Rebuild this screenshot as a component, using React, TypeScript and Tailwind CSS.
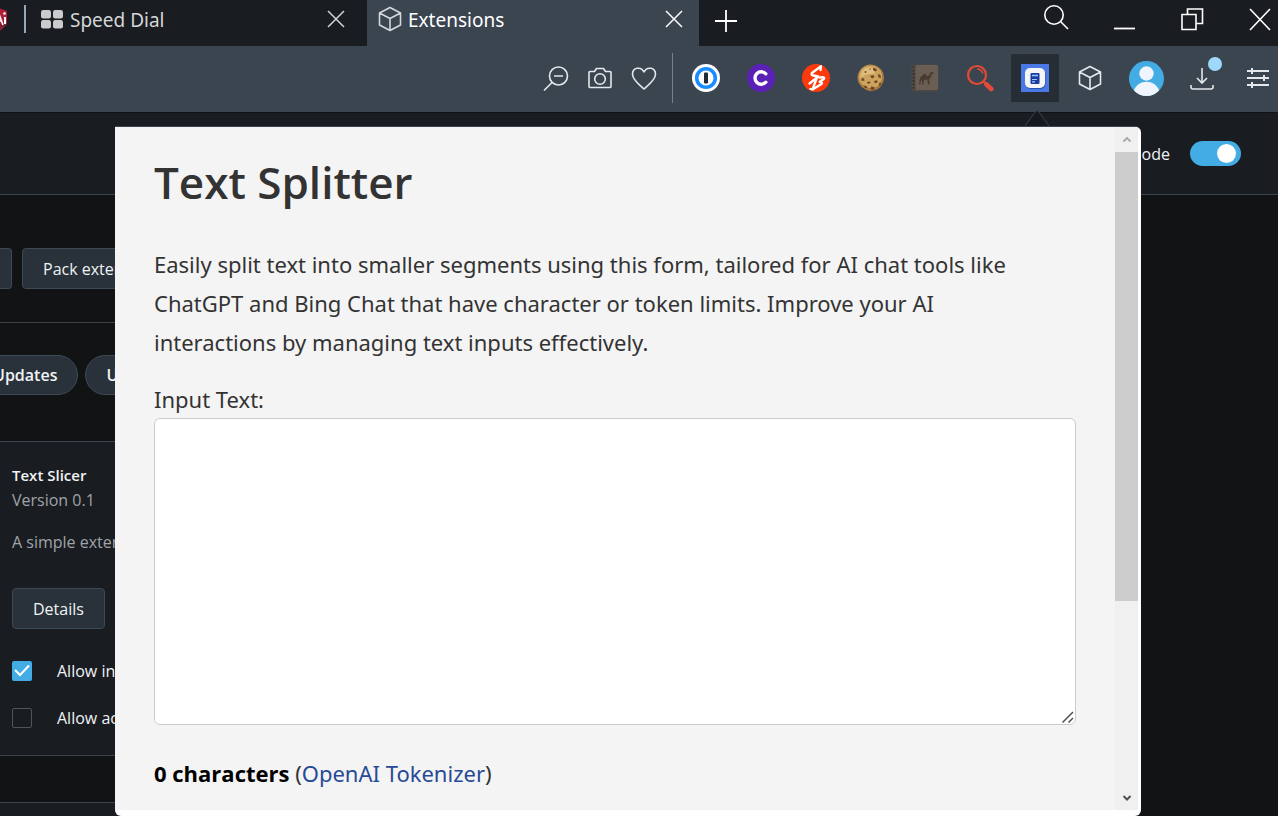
import React from "react";

type IconProps = { children: React.ReactNode; size?: string; box?: string; stroke?: string };

function Icon({ children, size = "size-7", box = "0 0 28 28", stroke = "1.6" }: IconProps) {
  return (
    <svg
      className={`${size} shrink-0`}
      viewBox={box}
      fill="none"
      stroke="currentColor"
      strokeWidth={stroke}
      aria-hidden="true"
    >
      {children}
    </svg>
  );
}

const Cube = () => (
  <Icon>
    <path d="M14 2.5 24.5 8v12L14 25.5 3.500 20V8Z M3.500 8 14 13.500 24.500 8 M14 13.500v12" strokeLinejoin="round" />
  </Icon>
);

const Cross = () => (
  <Icon size="size-5" box="0 0 20 20" stroke="1.5">
    <path d="m2 2 16 16M18 2 2 18" />
  </Icon>
);

function AiShield() {
  return (
    <svg className="h-7 w-2 shrink-0" viewBox="0 0 8 28" aria-hidden="true">
      <path d="M-12 7 -4 2 7 6v13l-6 6-6 3Z" fill="#b01f38" />
      <path d="M-12 20 7 18v1l-6 6-6 3Z" fill="#7c2230" />
      <path d="m-6 20 5-11 4 11M-4 16h6" stroke="#fff" strokeWidth="1.600" fill="none" />
      <path d="M5 12v7" stroke="#fff" strokeWidth="2" />
      <circle cx="4.500" cy="8.500" r="1.300" fill="#fff" />
    </svg>
  );
}

function OnePassword() {
  return (
    <svg className="size-7" viewBox="0 0 28 28" aria-hidden="true">
      <circle cx="14" cy="14" r="14" fill="#fff" />
      <circle cx="14" cy="14" r="9.300" fill="#fff" stroke="#1a8cff" strokeWidth="3.600" />
      <rect x="12" y="8.500" width="4" height="11" rx="1" fill="#222a33" />
    </svg>
  );
}

function PurpleC() {
  return (
    <svg className="size-7" viewBox="0 0 28 28" aria-hidden="true">
      <circle cx="14" cy="14" r="14" fill="#5b21b6" />
      <path d="M18.800 9.800a6.200 6.200 0 1 0 0 8.400" fill="none" stroke="#fff" strokeWidth="3.400" strokeLinecap="round" />
    </svg>
  );
}

function RedBolt() {
  return (
    <svg className="size-7" viewBox="0 0 28 28" aria-hidden="true">
      <circle cx="14" cy="14" r="14" fill="#fc3a0c" />
      <path
        d="M18.500 6 19 2.200 10 9q-1.500 2 1.500 2.500l4.800 1L7.500 19.500M14.600 14.500 10.500 25.500l-2-.5M10.500 25.500 19.500 20q1.800-1.800-1.800-2.200L22 14.800q1.200-2.500-4.500-1.200"
        fill="none"
        stroke="#fff"
        strokeWidth="2.300"
        strokeLinejoin="round"
        strokeLinecap="round"
      />
    </svg>
  );
}

function Cookie() {
  return (
    <svg className="size-7" viewBox="0 0 28 28" aria-hidden="true">
      <path
        d="M14 .5c3 0 5 .8 7.500 2.800 3 2 4.500 4 5 7.200.9 3.500.6 6-1 9-1.500 3.500-4 5.800-7.500 6.800-3.500 1.200-6.500.9-9.500-.8C4.500 23.500 2 20.500.9 17 0 13.500.5 10 2.500 7 4.500 3 9 .5 14 .5Z"
        fill="#a87b40"
      />
      <path d="M13 1.500c5-.5 9 2 11 6s1.500 8-1 12-6 5-10 4.500-9-3-10.500-7.500S2 7.500 5.500 4.500 10 1.800 13 1.500Z" fill="#cda25e" />
      <path d="M6 6c4-4 9-3 11-1s2 5-3 5-9 2-10 4 0-6 2-8Z" fill="#dfbd7c" />
      <g fill="#6d4724">
        <path d="m16 4 3 .5 1 2-2 1-2-1.500Z" />
        <path d="m13 12 3-1 1.500 2-2.500 1.500Z" />
        <path d="m21 10 2.500 1 .5 3-2.500-.5Z" />
        <path d="m4.500 14 2.500.5.500 2-3 .5Z" />
        <path d="m10 18 3-.5.500 1.500-2.500 1Z" />
        <path d="m17 17 3-.8.800 2-2.800 1Z" />
        <path d="m6.500 21.500 3 .5 1 2-2.500.3Z" />
        <path d="m14 22.500 3.500.5-.5 3-3.500-.6Z" />
        <path d="m22.500 18.500 1.800.5-.8 3-1.800-.8Z" />
        <circle cx="8.500" cy="8" r="1" />
        <circle cx="13" cy="5" r=".7" />
      </g>
    </svg>
  );
}

function CamelBook() {
  return (
    <svg className="size-7" viewBox="0 0 28 28" aria-hidden="true">
      <rect x=".5" y=".5" width="27" height="27" rx="2" fill="#4f4843" />
      <rect x="4.500" y="1" width="22.500" height="25" rx="1.500" fill="#695d54" />
      <path d="M2.500 2.500v23" stroke="#2f2c2a" strokeWidth="1.600" strokeDasharray="1.600 1.800" />
      <path
        d="M8 20.500 9 14c.8-2 2-1.500 3-3 .8-1.800 2.200-1.800 3 0 .8 1.500 2 1.500 3 .2l1.200-2.400c.5-1 2-1 3.300-.3v1.300l-2 .4c-.3 2.300-1 4-2.500 4.700l.5 5.600h-1.300l-1-5-3 .2-1 4.800h-1.300l.2-4.600-1.300 1.300-.6 3.300Z"
        fill="#4a3a32"
      />
    </svg>
  );
}

function RedLens() {
  return (
    <svg className="size-7" viewBox="0 0 28 28" aria-hidden="true">
      <circle cx="11" cy="11" r="9" fill="none" stroke="#e34a38" strokeWidth="2.200" />
      <path d="M11 5c3 0 5 2 5.800 4.500" fill="none" stroke="#e34a38" strokeWidth="1.500" />
      <path d="m17.800 17.800 3 3" stroke="#e34a38" strokeWidth="2.500" />
      <path d="m20.500 20.500 4.800 4.500" stroke="#e34a38" strokeWidth="4.600" strokeLinecap="round" />
    </svg>
  );
}

function SplitterLogo() {
  return (
    <svg className="size-7" viewBox="0 0 28 28" aria-hidden="true">
      <rect width="28" height="28" fill="#4a78e4" />
      <rect x="4.500" y="5" width="20" height="20" rx="5" fill="#2b52b0" />
      <rect x="4" y="4" width="20" height="20" rx="5" fill="#f5f5f5" />
      <rect x="9.500" y="9" width="9" height="11" rx="1" fill="#1a3c9c" />
      <path d="M11 11.500h6" stroke="#8fc4ff" strokeWidth="1.600" />
      <path d="M11 15.500h5M11 17.800h3" stroke="#a9c6f5" strokeWidth="1.200" />
    </svg>
  );
}

function Avatar() {
  return (
    <svg className="size-[35px]" viewBox="0 0 35 35" aria-hidden="true">
      <defs>
        <clipPath id="avatar-disc">
          <circle cx="17.500" cy="17.500" r="17.500" />
        </clipPath>
      </defs>
      <g clipPath="url(#avatar-disc)">
        <rect width="35" height="35" fill="#43ace4" />
        <circle cx="17.500" cy="12.500" r="7.200" fill="#f0f4fd" />
        <path d="M5 29c2.500-5.500 7-8.300 12.500-8.300S27.500 23.500 30 29v7H5Z" fill="#f0f4fd" />
      </g>
    </svg>
  );
}

function TabStrip() {
  return (
    <header className="flex h-[46px] items-stretch bg-[#191c20] font-['Noto_Sans',sans-serif] text-[19px] text-[#d4d6d8]">
      <div className="flex min-w-0 flex-[0_1_367px] items-center pb-2">
        <AiShield />
        <span className="ml-4 h-7 w-0.5 shrink-0 bg-[#9aa6b8]" />
        <Icon size="ml-3.5 size-6" box="0 0 24 24">
          <g fill="#c9cbcd" stroke="none">
            <rect x="1" y="3" width="10" height="8.500" rx="2.200" />
            <rect x="13" y="3" width="10" height="8.500" rx="2.200" />
            <rect x="1" y="13" width="10" height="8.500" rx="2.200" />
            <rect x="13" y="13" width="10" height="8.500" rx="2.200" />
          </g>
        </Icon>
        <span className="ml-1.5 flex-1 truncate pt-0.5">Speed Dial</span>
        <button aria-label="Close Speed Dial" className="mr-[21px]">
          <Cross />
        </button>
      </div>
      <div className="flex min-w-0 flex-[0_1_332px] items-center bg-[#3a4550] pb-2 pl-[9px] text-white">
        <span className="text-[#d4d8dc]">
          <Cube />
        </span>
        <span className="ml-1 flex-1 truncate pt-0.5">Extensions</span>
        <button aria-label="Close Extensions" className="mr-[15px]">
          <Cross />
        </button>
      </div>
      <button aria-label="New tab" className="ml-4 pb-1 text-white">
        <Icon size="size-[22px]" box="0 0 22 22" stroke="1.8">
          <path d="M11 0v22M0 11h22" />
        </Icon>
      </button>
      <div className="ml-auto flex items-center gap-10 pr-1 pb-2 text-white">
        <button aria-label="Search tabs">
          <Icon>
            <circle cx="12" cy="10" r="9.200" />
            <path d="m18.500 16.500 7.500 7.500" />
          </Icon>
        </button>
        <button aria-label="Minimize">
          <Icon>
            <path d="M4 23.500h21" strokeWidth="1.800" />
          </Icon>
        </button>
        <button aria-label="Restore">
          <Icon>
            <path d="M4 9.500h14v15H4Z M9.500 9V4h15v14.500h-6" />
          </Icon>
        </button>
        <button aria-label="Close window">
          <Icon>
            <path d="m4 4 20 21M24 4 4 25" />
          </Icon>
        </button>
      </div>
    </header>
  );
}

const extensions = [
  { name: "1Password", logo: <OnePassword /> },
  { name: "Clockify", logo: <PurpleC /> },
  { name: "SB", logo: <RedBolt /> },
  { name: "Cookies", logo: <Cookie /> },
  { name: "Camel notebook", logo: <CamelBook /> },
  { name: "Search by image", logo: <RedLens /> },
  { name: "Text Splitter", logo: <SplitterLogo />, active: true },
  { name: "All extensions", logo: <Cube /> },
];

function Toolbar() {
  return (
    <nav className="flex h-[66px] items-center justify-end bg-[#3a4550] pb-0.5 text-[#e4e8ec]">
      <div className="flex gap-4">
        <button aria-label="Zoom out">
          <Icon>
            <circle cx="16.500" cy="12" r="9" />
            <path d="M12 12h9M10 18.500 2 26.500" />
          </Icon>
        </button>
        <button aria-label="Snapshot">
          <Icon>
            <path d="M3 8.500q0-1 1-1h4.500l2-3h7l2 3H24q1 0 1 1v14q0 1-1 1H4q-1 0-1-1Z" strokeLinejoin="round" />
            <circle cx="14" cy="15" r="5.300" />
          </Icon>
        </button>
        <button aria-label="Bookmark">
          <Icon>
            <path d="M14 25C9 20.500 2.500 15.500 2.500 10.200 2.500 3.500 11 2 14 8c3-6 11.500-4.500 11.500 2.200C25.500 15.500 19 20.500 14 25Z" strokeLinejoin="round" />
          </Icon>
        </button>
      </div>
      <span className="ml-3.5 h-[50px] w-px bg-[#75808a]" />
      <div className="ml-1.5 grid w-[438px] grid-cols-8 items-center justify-items-center">
        {extensions.map((e) => (
          <button
            key={e.name}
            aria-label={e.name}
            className={`flex size-12 items-center justify-center ${e.active ? "bg-[#272d34]" : ""}`}
          >
            {e.logo}
          </button>
        ))}
      </div>
      <button aria-label="Profile" className="ml-3">
        <Avatar />
      </button>
      <button aria-label="Downloads" className="relative ml-6">
        <Icon>
          <path d="M14 4v15M9 14l5 5 5-5M3 21v2q0 2 2 2h18q2 0 2-2v-2" />
        </Icon>
        <span className="absolute -top-[7px] right-[-6px] size-3.5 rounded-full bg-[#9ed8fb]" />
      </button>
      <button aria-label="Easy setup" className="ml-7 mr-1.5">
        <Icon>
          <path d="M3 7h22M3 14h22M3 21h22" strokeWidth="1.800" />
          <path d="M8 4v6M20 11v6M8 18v6" strokeWidth="2" />
        </Icon>
      </button>
    </nav>
  );
}

function ExtensionsPage() {
  return (
    <main className="flex flex-1 flex-col overflow-hidden bg-[#111315] text-base whitespace-nowrap text-[#f0f2f4]">
      <div className="flex h-[83px] shrink-0 items-center justify-end border-t border-b border-t-[#101214] border-b-[#3a4550] bg-[#191c21] pr-[37px]">
        <label htmlFor="developer-mode">Developer mode</label>
        <span className="relative ml-5 flex">
          <input
            id="developer-mode"
            type="checkbox"
            defaultChecked
            className="h-[25px] w-[51px] appearance-none rounded-full bg-[#43ace4]"
          />
          <span className="pointer-events-none absolute top-[3px] right-[5px] size-[19px] rounded-full bg-white" />
        </span>
      </div>

      <div className="mr-[200px] flex flex-1 flex-col">
        <div className="flex h-32 shrink-0 items-center gap-2.5 border-b border-[#3a4550] pt-5">
          <button aria-label="Load unpacked" className="h-[41px] w-3 shrink-0 rounded-r border border-l-0 border-[#3d4a56] bg-[#29323a]" />
          <button className="h-[41px] shrink-0 rounded border border-[#3d4a56] bg-[#29323a] px-5">Pack extension</button>
        </div>

        <div className="flex h-[118px] shrink-0 gap-[7px] pt-8 font-semibold">
          <button className="-ml-7 h-10 shrink-0 rounded-full border border-[#3d4a56] bg-[#29323a] px-5">Updates</button>
          <button className="h-10 shrink-0 rounded-full border border-[#3d4a56] bg-[#29323a] px-5">User</button>
        </div>

        <section className="h-[315px] shrink-0 border-y border-[#3a4550] bg-[#191c21] pt-5 pl-3">
          <h2 className="text-[15px] leading-[26px] font-semibold">Text Slicer</h2>
          <p className="leading-6 text-[#a0a4a8]">Version 0.1</p>
          <p className="mt-[18px] leading-6 text-[#a0a4a8]">A simple extension</p>
          <button className="mt-[34px] h-[41px] rounded border border-[#3d4a56] bg-[#29323a] px-5">Details</button>
          <div className="mt-[30px] flex items-center gap-[25px]">
            <span className="relative flex">
              <input id="incognito" type="checkbox" defaultChecked className="size-5 appearance-none rounded-xs bg-[#43ace4]" />
              <svg className="pointer-events-none absolute inset-0 size-5" viewBox="0 0 20 20" aria-hidden="true">
                <path d="m3 9 5 5 9-9.500" fill="none" stroke="#fff" strokeWidth="2" />
              </svg>
            </span>
            <label htmlFor="incognito">Allow in private</label>
          </div>
          <div className="mt-[23px] flex items-center gap-[25px]">
            <input id="search-access" type="checkbox" className="size-5 appearance-none rounded-xs border border-[#50555a]" />
            <label htmlFor="search-access">Allow access</label>
          </div>
        </section>
        <section className="mt-[46px] min-h-3.5 flex-1 border-t border-[#3a4550] bg-[#191c21]" />
      </div>
    </main>
  );
}

function Scrollbar() {
  return (
    <div className="flex w-[23px] shrink-0 flex-col bg-[#f0f0f0]">
      <button aria-label="Scroll up" className="flex h-[25px] shrink-0 items-center justify-center text-[#a8a8a8]">
        <Icon size="size-3" box="0 0 12 12" stroke="1.8">
          <path d="m2.500 7.500 3.500-3.500 3.500 3.500" />
        </Icon>
      </button>
      <div className="flex-1">
        <div className="h-[71%] bg-[#cdcdcd]" />
      </div>
      <button aria-label="Scroll down" className="flex h-[25px] shrink-0 items-center justify-center text-[#505050]">
        <Icon size="size-3" box="0 0 12 12" stroke="2">
          <path d="m2.500 4 3.500 3.500 3.500-3.500" />
        </Icon>
      </button>
    </div>
  );
}

function SplitterPopup() {
  return (
    <div role="dialog" aria-label="Text Splitter" className="absolute top-[126px] right-[137px] bottom-0 left-[115px]">
      <svg className="absolute right-[92px] bottom-full h-4 w-6" viewBox="0 0 24 16" aria-hidden="true">
        <path d="M0 16 10.500 1.500q1.500-1.500 3 0L24 16" fill="#15181c" stroke="#3a4550" />
      </svg>
      <div className="flex h-full overflow-hidden rounded-md rounded-tl-none border-t border-[#3a4550] bg-white pr-[3px] pb-1.5">
        <div className="flex-1 overflow-hidden bg-[#f4f4f4] px-[39px] pt-6 font-['Noto_Sans',sans-serif] text-[22px] leading-[39px] text-[#333333]">
          <h1 className="font-['Open_Sans',sans-serif] text-[44px] leading-[62px] font-semibold">Text Splitter</h1>
          <p className="mt-8 pr-10">
            Easily split text into smaller segments using this form, tailored for AI chat tools like ChatGPT and Bing Chat
            that have character or token limits. Improve your AI interactions by managing text inputs effectively.
          </p>
          <label htmlFor="input-text" className="mt-[18px] block leading-[38px]">
            Input Text:
          </label>
          <div className="relative">
            <textarea
              id="input-text"
              className="block h-[307px] w-full resize-none rounded-md border border-[#cccccc] bg-white p-3 outline-none"
            />
            <svg className="pointer-events-none absolute right-0.5 bottom-0.5 size-3" viewBox="0 0 12 12" aria-hidden="true">
              <path d="M.5 11.500 11 1M6.500 11.500 11 7" stroke="#505050" strokeWidth="1.500" />
            </svg>
          </div>
          <p className="mt-[29px]">
            <strong className="font-['Open_Sans',sans-serif] font-bold text-black">0 characters</strong> (
            <a href="#tokenizer" className="text-[#274a96]">
              OpenAI Tokenizer
            </a>
            )
          </p>
        </div>
        <Scrollbar />
      </div>
    </div>
  );
}

export default function App() {
  return (
    <div className="relative flex min-h-screen flex-col overflow-hidden font-['Open_Sans','Noto_Sans',sans-serif]">
      <TabStrip />
      <Toolbar />
      <ExtensionsPage />
      <SplitterPopup />
    </div>
  );
}
